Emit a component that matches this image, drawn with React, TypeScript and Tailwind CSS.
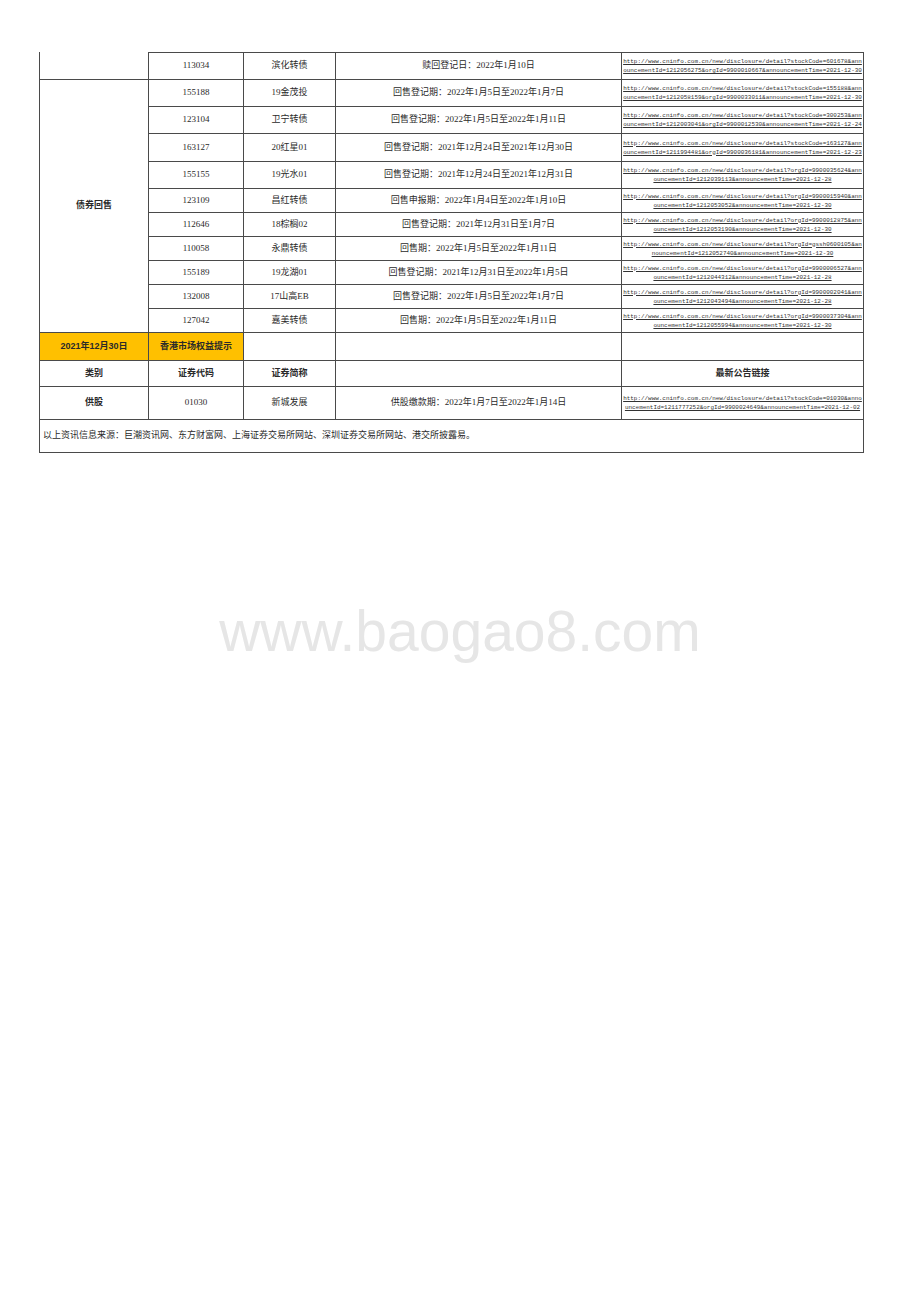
import React from 'react';

type Row = {
  code: string;
  name: string;
  info: string;
  l1: string;
  l2: string;
};

const base = 'http://www.cninfo.com.cn/new/disclosure/detail?';

const first: Row = {
  code: '113034',
  name: '滨化转债',
  info: '赎回登记日：2022年1月10日',
  l1: base + 'stockCode=601678&ann',
  l2: 'ouncementId=1212056275&orgId=9900010667&announcementTime=2021-12-30',
};

const putRows: Row[] = [
  { code: '155188', name: '19金茂投', info: '回售登记期：2022年1月5日至2022年1月7日', l1: base + 'stockCode=155188&ann', l2: 'ouncementId=1212058159&orgId=9900033011&announcementTime=2021-12-30' },
  { code: '123104', name: '卫宁转债', info: '回售登记期：2022年1月5日至2022年1月11日', l1: base + 'stockCode=300253&ann', l2: 'ouncementId=1212003041&orgId=9900012530&announcementTime=2021-12-24' },
  { code: '163127', name: '20红星01', info: '回售登记期：2021年12月24日至2021年12月30日', l1: base + 'stockCode=163127&ann', l2: 'ouncementId=1211994481&orgId=9900036181&announcementTime=2021-12-23' },
  { code: '155155', name: '19光水01', info: '回售登记期：2021年12月24日至2021年12月31日', l1: base + 'orgId=9900035624&ann', l2: 'ouncementId=1212039113&announcementTime=2021-12-28' },
  { code: '123109', name: '昌红转债', info: '回售申报期：2022年1月4日至2022年1月10日', l1: base + 'orgId=9900015940&ann', l2: 'ouncementId=1212053052&announcementTime=2021-12-30' },
  { code: '112646', name: '18棕榈02', info: '回售登记期：2021年12月31日至1月7日', l1: base + 'orgId=9900012875&ann', l2: 'ouncementId=1212053190&announcementTime=2021-12-30' },
  { code: '110058', name: '永鼎转债', info: '回售期：2022年1月5日至2022年1月11日', l1: base + 'orgId=gssh0600105&an', l2: 'nouncementId=1212052740&announcementTime=2021-12-30' },
  { code: '155189', name: '19龙湖01', info: '回售登记期：2021年12月31日至2022年1月5日', l1: base + 'orgId=9900006527&ann', l2: 'ouncementId=1212044312&announcementTime=2021-12-28' },
  { code: '132008', name: '17山高EB', info: '回售登记期：2022年1月5日至2022年1月7日', l1: base + 'orgId=9900002041&ann', l2: 'ouncementId=1212043494&announcementTime=2021-12-28' },
  { code: '127042', name: '嘉美转债', info: '回售期：2022年1月5日至2022年1月11日', l1: base + 'orgId=9900037304&ann', l2: 'ouncementId=1212055994&announcementTime=2021-12-30' },
];

// excel-ish cell: right + bottom rule, centered content
const cell =
  'flex items-center justify-center border-r border-b border-[#4a4a4a] text-[9px] text-[#2a2a2a] overflow-hidden whitespace-nowrap';
const serif = " font-['Liberation_Serif','Noto_Sans_CJK_SC',serif]";
const bold = " font-bold font-['Liberation_Sans','Noto_Sans_CJK_SC',sans-serif]";
const line =
  "block w-full text-center text-[5.95px] leading-[9px] underline text-[#333] font-['Liberation_Mono',monospace]";

function LinkCell({ l1, l2, top }: { l1: string; l2: string; top?: boolean }) {
  return (
    <div className={cell + ' flex-col px-[1px]' + (top ? ' border-t' : '')}>
      <span className={line}>{l1}</span>
      <span className={line}>{l2}</span>
    </div>
  );
}

function DataCells({ r, top }: { r: Row; top?: boolean }) {
  const t = top ? ' border-t' : '';
  return (
    <>
      <div className={cell + serif + t}>{r.code}</div>
      <div className={cell + serif + t}>{r.name}</div>
      <div className={cell + serif + t}>{r.info}</div>
      <LinkCell l1={r.l1} l2={r.l2} top={top} />
    </>
  );
}

export default function App() {
  return (
    <div className="w-[920px] min-h-[1302px] bg-white pt-[52px]">
      <div className="ml-[39px] w-[825px] grid grid-cols-[109px_95px_92px_286px_242px] grid-rows-[28px_27px_27px_28px_27px_24px_24px_24px_24px_24px_24px_28px_26px_33px_33px] border-l border-[#4a4a4a]">
        {/* row 1: continuation from previous page */}
        <div className="border-r border-b border-[#4a4a4a]" />
        <DataCells r={first} top />

        {/* 债券回售 group */}
        <div className={cell + bold + ' row-span-10'}>债券回售</div>
        {putRows.map((r) => (
          <DataCells key={r.code} r={r} />
        ))}

        {/* section title row */}
        <div className={cell + bold + ' bg-[#ffc000]'}>2021年12月30日</div>
        <div className={cell + bold + ' bg-[#ffc000]'}>香港市场权益提示</div>
        <div className={cell} />
        <div className={cell} />
        <div className={cell} />

        {/* header row */}
        <div className={cell + bold}>类别</div>
        <div className={cell + bold}>证券代码</div>
        <div className={cell + bold}>证券简称</div>
        <div className={cell} />
        <div className={cell + bold}>最新公告链接</div>

        {/* 供股 row */}
        <div className={cell + bold}>供股</div>
        <div className={cell + serif}>01030</div>
        <div className={cell + serif}>新城发展</div>
        <div className={cell + serif}>供股缴款期：2022年1月7日至2022年1月14日</div>
        <LinkCell
          l1={base + 'stockCode=01030&anno'}
          l2="uncementId=1211777252&orgId=9900024649&announcementTime=2021-12-02"
        />

        {/* footer note */}
        <div className="col-span-5 flex items-center border-r border-b border-[#4a4a4a] pl-[3px] text-[9px] text-[#2a2a2a] whitespace-nowrap font-['Liberation_Serif','Noto_Sans_CJK_SC',serif]">
          以上资讯信息来源：巨潮资讯网、东方财富网、上海证券交易所网站、深圳证券交易所网站、港交所披露易。
        </div>
      </div>

      <div className="mt-[150px] w-full text-center text-[57px] leading-none text-[#e6e6e6] font-['Liberation_Sans',sans-serif]">
        www.baogao8.com
      </div>
    </div>
  );
}
